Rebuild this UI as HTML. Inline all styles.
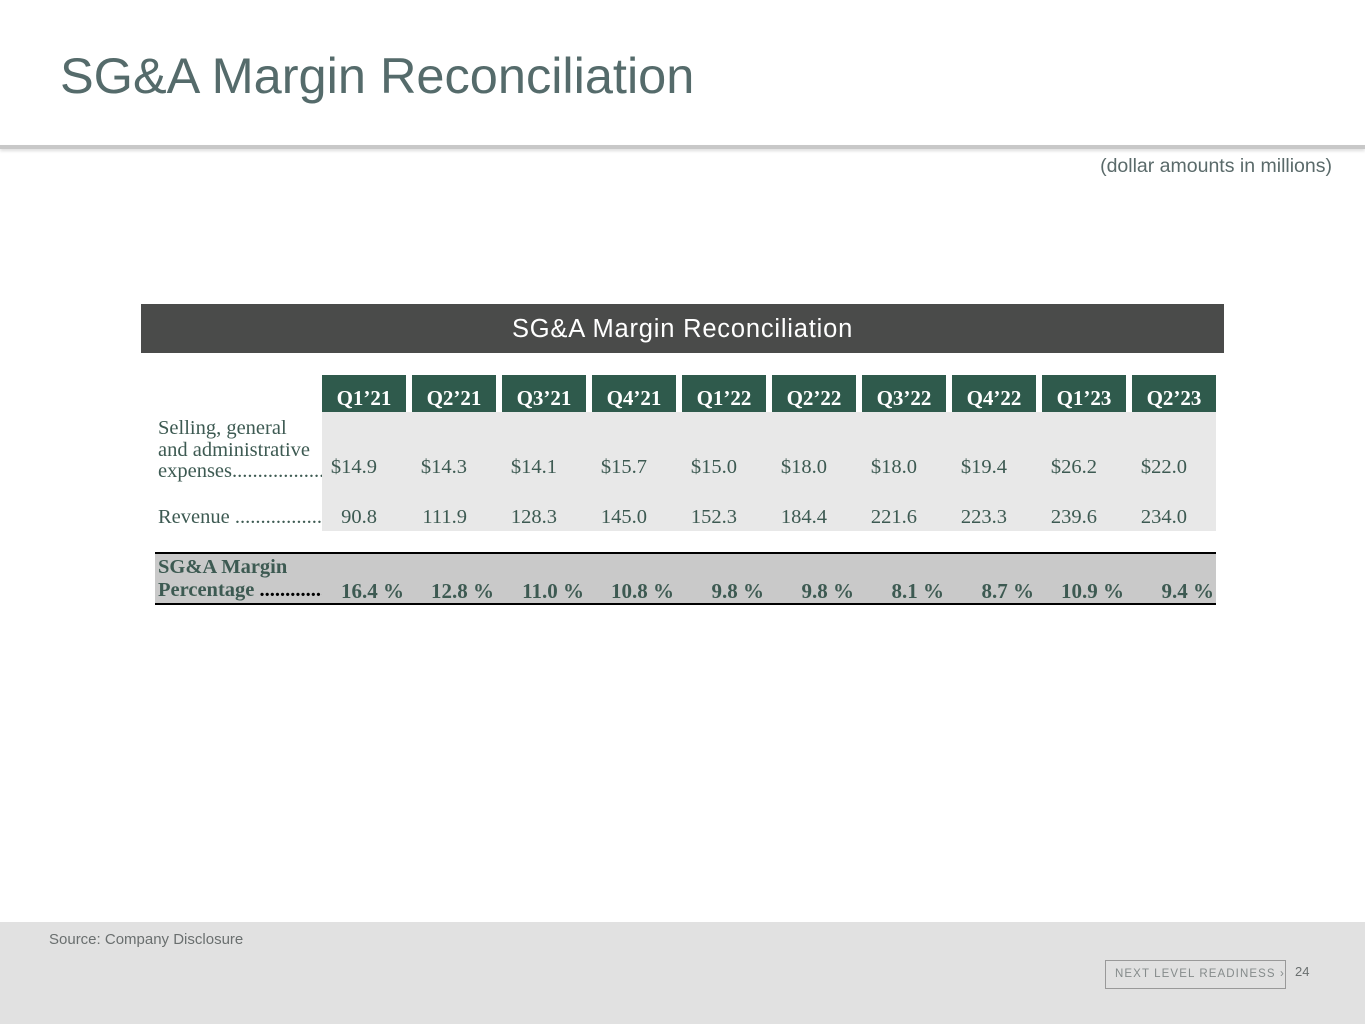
<!DOCTYPE html>
<html><head><meta charset="utf-8"><style>
*{margin:0;padding:0;box-sizing:border-box}
body{width:1365px;height:1024px;position:relative;background:#fff;overflow:hidden;font-family:"Liberation Sans",sans-serif}
.a{position:absolute;white-space:nowrap}
.s{font-family:"Liberation Serif",serif;color:#3d5a52;font-size:20.5px}
.h{background:#2f5a4c;color:#fff;font-weight:bold;text-align:center;top:375px;height:37px;width:84px;line-height:47px;font-size:21px}
.v{width:55px;text-align:right}
.m{width:82px;text-align:right;font-weight:bold;top:579px;font-size:21px}
.lb{width:164px;overflow:hidden}
</style></head><body>
<div class="a" style="left:0;top:0;width:1365px;height:145px;background:#fff"></div>
<div class="a" style="left:0;top:145px;width:1365px;height:4px;background:#c8c8c8;box-shadow:0 2px 3px #ddd"></div>
<div class="a" style="left:60px;top:46px;font-size:50.5px;color:#556b6b">SG&amp;A Margin Reconciliation</div>
<div class="a" style="right:33px;top:155px;font-size:19.5px;color:#5a6a6a">(dollar amounts in millions)</div>

<div class="a" style="left:141px;top:304px;width:1083px;height:49px;background:#4a4b4a;color:#fff;font-size:25.5px;text-align:center;line-height:51px;letter-spacing:0.8px">SG&amp;A Margin Reconciliation</div>

<div class="a" style="left:322px;top:412px;width:894px;height:119px;background:#e8e8e8"></div>
<div class="a" style="left:155px;top:552px;width:1061px;height:53px;background:#c9c9c9;border-top:2px solid #000;border-bottom:2px solid #000"></div>

<div class="a s h" style="left:322px">Q1’21</div>
<div class="a s h" style="left:412px">Q2’21</div>
<div class="a s h" style="left:502px">Q3’21</div>
<div class="a s h" style="left:592px">Q4’21</div>
<div class="a s h" style="left:682px">Q1’22</div>
<div class="a s h" style="left:772px">Q2’22</div>
<div class="a s h" style="left:862px">Q3’22</div>
<div class="a s h" style="left:952px">Q4’22</div>
<div class="a s h" style="left:1042px">Q1’23</div>
<div class="a s h" style="left:1132px">Q2’23</div>

<div class="a s lb" style="left:158px;top:418px;line-height:21.5px">Selling, general<br>and administrative<br>expenses.........................</div>
<div class="a s lb" style="left:158px;top:506px">Revenue .........................</div>
<div class="a s lb" style="left:158px;top:556px;line-height:23px;font-weight:bold">SG&amp;A Margin<br>Percentage <span style="color:#000">......................</span></div>

<div class="a s v" style="left:322px;top:456px">$14.9</div>
<div class="a s v" style="left:412px;top:456px">$14.3</div>
<div class="a s v" style="left:502px;top:456px">$14.1</div>
<div class="a s v" style="left:592px;top:456px">$15.7</div>
<div class="a s v" style="left:682px;top:456px">$15.0</div>
<div class="a s v" style="left:772px;top:456px">$18.0</div>
<div class="a s v" style="left:862px;top:456px">$18.0</div>
<div class="a s v" style="left:952px;top:456px">$19.4</div>
<div class="a s v" style="left:1042px;top:456px">$26.2</div>
<div class="a s v" style="left:1132px;top:456px">$22.0</div>

<div class="a s v" style="left:322px;top:506px">90.8</div>
<div class="a s v" style="left:412px;top:506px">111.9</div>
<div class="a s v" style="left:502px;top:506px">128.3</div>
<div class="a s v" style="left:592px;top:506px">145.0</div>
<div class="a s v" style="left:682px;top:506px">152.3</div>
<div class="a s v" style="left:772px;top:506px">184.4</div>
<div class="a s v" style="left:862px;top:506px">221.6</div>
<div class="a s v" style="left:952px;top:506px">223.3</div>
<div class="a s v" style="left:1042px;top:506px">239.6</div>
<div class="a s v" style="left:1132px;top:506px">234.0</div>

<div class="a s m" style="left:322px">16.4 %</div>
<div class="a s m" style="left:412px">12.8 %</div>
<div class="a s m" style="left:502px">11.0 %</div>
<div class="a s m" style="left:592px">10.8 %</div>
<div class="a s m" style="left:682px">9.8 %</div>
<div class="a s m" style="left:772px">9.8 %</div>
<div class="a s m" style="left:862px">8.1 %</div>
<div class="a s m" style="left:952px">8.7 %</div>
<div class="a s m" style="left:1042px">10.9 %</div>
<div class="a s m" style="left:1132px">9.4 %</div>

<div class="a" style="left:0;top:922px;width:1365px;height:102px;background:#e1e1e1"></div>
<div class="a" style="left:49px;top:931px;font-size:15px;color:#6a6f6f">Source: Company Disclosure</div>
<div class="a" style="left:1105px;top:960px;width:181px;height:29px;border:1.5px solid #999;font-size:11.5px;color:#858b8b;letter-spacing:1.1px;line-height:27px;padding-left:9px;overflow:hidden">NEXT LEVEL READINESS ›</div>
<div class="a" style="left:1295px;top:964px;font-size:13px;color:#6a6f6f">24</div>
</body></html>
